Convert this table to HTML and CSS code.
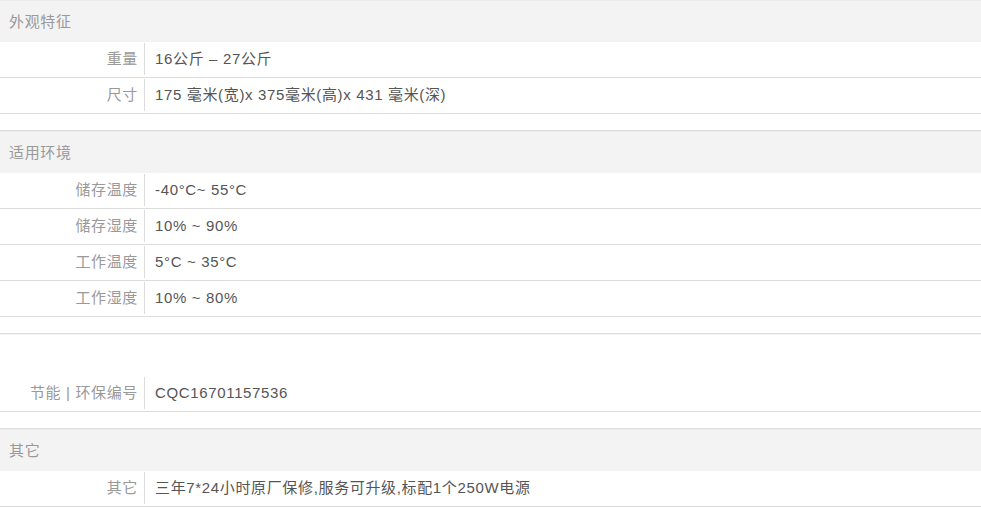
FILE: index.html
```html
<!DOCTYPE html>
<html lang="zh-CN">
<head>
<meta charset="utf-8">
<title>规格参数</title>
<link rel="stylesheet" href="styles.css">
</head>
<body>
<div class="specs">
  <section class="group">
    <div class="group-title">外观特征</div>
    <div class="row"><div class="label">重量</div><div class="value">16公斤 – 27公斤</div></div>
    <div class="row"><div class="label">尺寸</div><div class="value">175 毫米(宽)x 375毫米(高)x 431 毫米(深)</div></div>
  </section>
  <section class="group">
    <div class="group-title">适用环境</div>
    <div class="row"><div class="label">储存温度</div><div class="value">-40°C~ 55°C</div></div>
    <div class="row"><div class="label">储存湿度</div><div class="value">10% ~ 90%</div></div>
    <div class="row"><div class="label">工作温度</div><div class="value">5°C ~ 35°C</div></div>
    <div class="row"><div class="label">工作湿度</div><div class="value">10% ~ 80%</div></div>
  </section>
  <section class="group">
    <div class="group-title blank"></div>
    <div class="row"><div class="label">节能 | 环保编号</div><div class="value">CQC16701157536</div></div>
  </section>
  <section class="group">
    <div class="group-title">其它</div>
    <div class="row"><div class="label">其它</div><div class="value">三年7*24小时原厂保修,服务可升级,标配1个250W电源</div></div>
  </section>
</div>
</body>
</html>
```

FILE: styles.css
```css
html, body {
  margin: 0;
  padding: 0;
  background: #fff;
}
body {
  font-family: "Liberation Sans", "Noto Sans CJK SC", Arial, sans-serif;
  font-size: 15px;
  letter-spacing: 0.65px;
  color: #555;
}
.specs {
  width: 981px;
  margin-top: -1px;
}
.group {
  border-top: 1px solid #dedede;
  margin-bottom: 16px;
}
.group-title {
  height: 41px;
  line-height: 42px;
  padding-left: 9px;
  background: #f3f3f3;
  border-top: 1px solid #ebebeb;
  color: #999;
}
.group-title.blank {
  background: #fff;
  border-top-color: #f2f2f2;
}
.row {
  display: flex;
  height: 35px;
  border-bottom: 1px solid #dcdcdc;
}
.label {
  width: 138px;
  flex: none;
  margin: 1px 0 2px;
  padding-right: 6px;
  border-right: 1px solid #dcdcdc;
  text-align: right;
  line-height: 32px;
  color: #999;
}
.value {
  padding-left: 10px;
  line-height: 34px;
  color: #555;
}
```
